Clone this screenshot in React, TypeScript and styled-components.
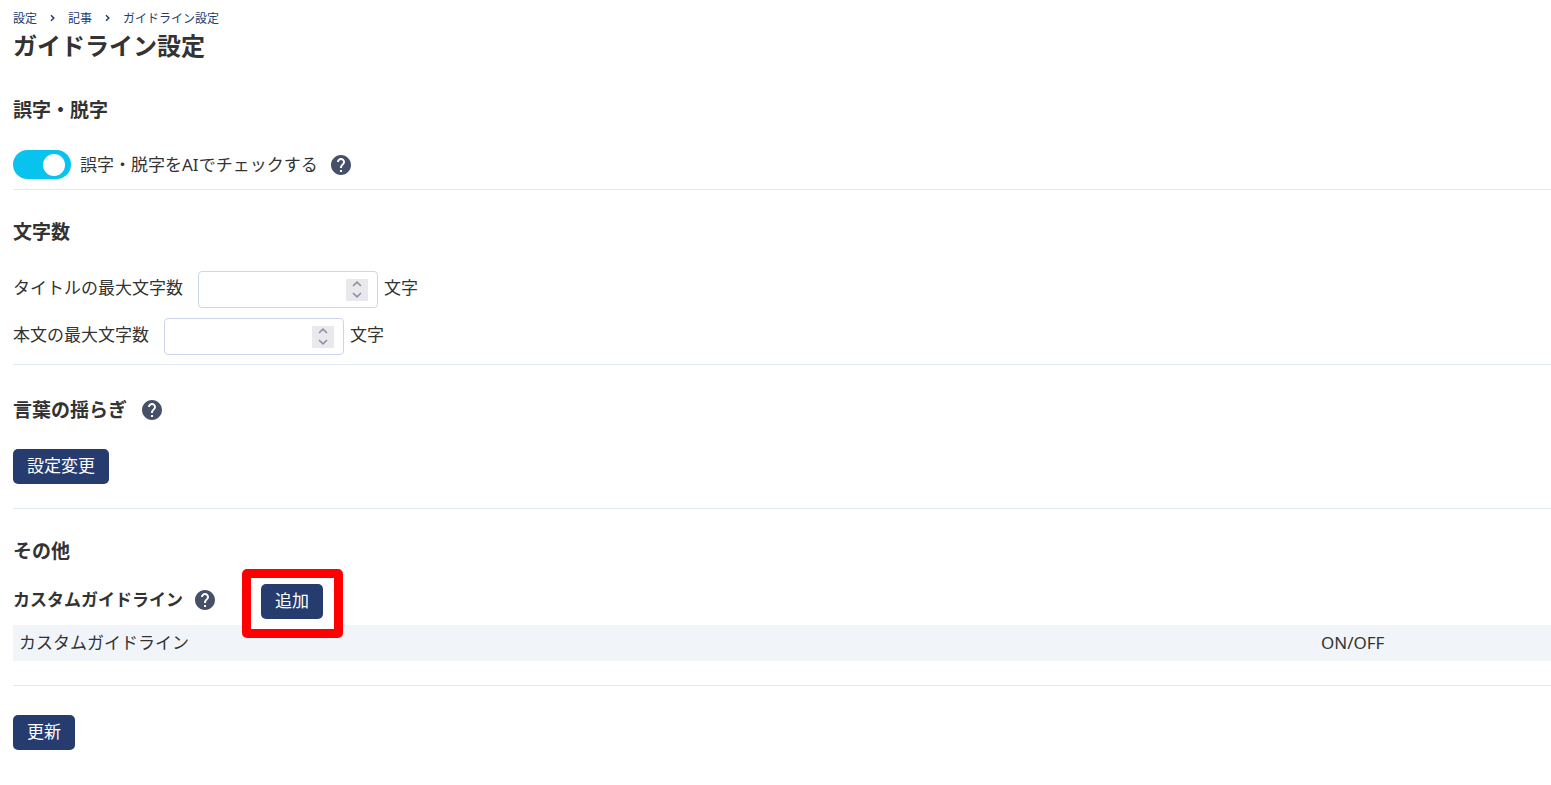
import React, { useState } from "react";
import styled, { createGlobalStyle } from "styled-components";
import { MdHelp } from "react-icons/md";

const GlobalStyle = createGlobalStyle`
  *, *::before, *::after { box-sizing: border-box; }
  body {
    margin: 0;
    background: #fff;
    color: #333;
    font-family: "Noto Sans", "Noto Sans CJK JP", sans-serif;
    font-size: 17px;
    line-height: 24px;
  }
  button, input { font: inherit; }
`;

const Page = styled.main`
  padding: 9px 0 32px 13px;
`;

const Breadcrumb = styled.nav`
  ol {
    display: flex;
    align-items: center;
    margin: 0;
    padding: 0;
    list-style: none;
    font-size: 12px;
    line-height: 20px;
  }
  li {
    display: flex;
    align-items: center;
  }
  a {
    color: #263c6f;
    text-decoration: none;
  }
`;

const Separator = styled.svg`
  width: 7px;
  height: 8px;
  margin: 0 12px 2px;
  fill: none;
  stroke: #263c6f;
  stroke-width: 1.5;
`;

const PageTitle = styled.h1`
  margin: 0;
  font-size: 24px;
  line-height: 34px;
`;

const Section = styled.section<{ $top: number; $bottom: number }>`
  padding: ${(p) => p.$top}px 0 ${(p) => p.$bottom}px;
  border-bottom: 1px solid #e2e8f0;
`;

const SectionTitle = styled.h2<{ $gap?: number }>`
  display: flex;
  align-items: center;
  gap: 13px;
  margin: 0 0 ${(p) => p.$gap ?? 25}px;
  font-size: 19px;
  line-height: 28px;
`;

const SubTitle = styled.h3`
  margin: 0 10px 0 0;
  font-size: 17px;
  line-height: 24px;
`;

const HelpButton = styled.button`
  display: inline-flex;
  padding: 0;
  border: 0;
  background: none;
  color: #475069;
  cursor: pointer;
  svg {
    width: 24px;
    height: 24px;
  }
`;

const ToggleRow = styled.div`
  display: flex;
  align-items: center;
  gap: 11px;
  min-height: 31px;
`;

const ToggleLabel = styled.label`
  display: flex;
  align-items: center;
  gap: 9px;
  cursor: pointer;
`;

const Toggle = styled.input`
  appearance: none;
  display: flex;
  align-items: center;
  width: 58px;
  height: 29px;
  margin: 0;
  padding: 0 6px;
  border-radius: 15px;
  background: #cbd5e1;
  cursor: pointer;
  &::before {
    content: "";
    width: 22px;
    height: 22px;
    border-radius: 50%;
    background: #fff;
  }
  &:checked {
    justify-content: flex-end;
    background: #08c3ee;
  }
`;

const FieldList = styled.div`
  display: flex;
  flex-direction: column;
  gap: 10px;
`;

const FieldRow = styled.div`
  display: flex;
  align-items: center;
  label {
    margin-right: 15px;
    padding-bottom: 3px;
  }
`;

const Unit = styled.span`
  margin-left: 6px;
  padding-bottom: 3px;
`;

const NumberBox = styled.div`
  display: flex;
  align-items: center;
  width: 180px;
  height: 37px;
  padding: 0 9px;
  border: 1px solid #cbd6ea;
  border-radius: 4px;
  background: #fff;
`;

const NumberInput = styled.input`
  appearance: textfield;
  flex: 1;
  min-width: 0;
  padding: 0;
  border: 0;
  outline: 0;
  background: none;
  color: inherit;
  &::-webkit-inner-spin-button,
  &::-webkit-outer-spin-button {
    appearance: none;
    margin: 0;
  }
`;

const Stepper = styled.div`
  display: flex;
  flex-direction: column;
  background: #e9e9ed;
  button {
    display: flex;
    align-items: center;
    justify-content: center;
    width: 22px;
    height: 11px;
    padding: 0;
    border: 0;
    background: none;
    color: #8f8f9d;
  }
  svg {
    width: 10px;
    height: 6px;
    fill: none;
    stroke: currentColor;
    stroke-width: 1.6;
  }
`;

const Button = styled.button`
  height: 35px;
  padding: 0 14px 2px;
  border: 0;
  border-radius: 5px;
  background: #263c6f;
  color: #fff;
  line-height: 24px;
  cursor: pointer;
`;

const CustomBar = styled.div`
  display: flex;
  align-items: flex-start;
  margin-bottom: 6px;
  > h3, > button {
    margin-top: 4px;
  }
`;

const Highlight = styled.div`
  position: relative;
  z-index: 1;
  display: flex;
  margin-left: 44px;
  &::before {
    content: "";
    position: absolute;
    z-index: -1;
    inset: -15px -20px -19px -19px;
    border: 9px solid #f00;
    border-radius: 5px;
    background: #fff;
  }
`;

const GuidelineTable = styled.table`
  width: 100%;
  border-collapse: collapse;
  background: #f1f5fa;
  th {
    height: 36px;
    padding: 0 6px;
    font-weight: 400;
    text-align: left;
  }
  th:last-child {
    width: 236px;
  }
`;

const Footer = styled.div`
  padding-top: 29px;
`;

function Help({ topic }: { topic: string }) {
  return (
    <HelpButton type="button" aria-label={topic}>
      <MdHelp />
    </HelpButton>
  );
}

function Chevron() {
  return (
    <Separator viewBox="0 0 7 8" aria-hidden="true">
      <path d="M2 1.2 4.8 4 2 6.8" />
    </Separator>
  );
}

function NumberField({ id, label }: { id: string; label: string }) {
  const [value, setValue] = useState("");
  const step = (by: number) => setValue(String(Math.max(0, Number(value) + by)));
  return (
    <FieldRow>
      <label htmlFor={id}>{label}</label>
      <NumberBox>
        <NumberInput id={id} type="number" min={0} value={value} onChange={(e) => setValue(e.target.value)} />
        <Stepper>
          <button type="button" tabIndex={-1} aria-label="増やす" onClick={() => step(1)}>
            <svg viewBox="0 0 10 6"><path d="M1 5 5 1.2 9 5" /></svg>
          </button>
          <button type="button" tabIndex={-1} aria-label="減らす" onClick={() => step(-1)}>
            <svg viewBox="0 0 10 6"><path d="M1 1 5 4.8 9 1" /></svg>
          </button>
        </Stepper>
      </NumberBox>
      <Unit>文字</Unit>
    </FieldRow>
  );
}

export default function App() {
  const [check, setCheck] = useState(true);
  return (
    <>
      <GlobalStyle />
      <Page>
        <Breadcrumb>
          <ol>
            <li><a href="#settings">設定</a><Chevron /></li>
            <li><a href="#articles">記事</a><Chevron /></li>
            <li><a href="#guideline">ガイドライン設定</a></li>
          </ol>
        </Breadcrumb>
        <PageTitle>ガイドライン設定</PageTitle>

        <Section $top={33} $bottom={9}>
          <SectionTitle>誤字・脱字</SectionTitle>
          <ToggleRow>
            <ToggleLabel>
              <Toggle type="checkbox" role="switch" checked={check} onChange={(e) => setCheck(e.target.checked)} />
              誤字・脱字をAIでチェックする
            </ToggleLabel>
            <Help topic="誤字・脱字のヘルプ" />
          </ToggleRow>
        </Section>

        <Section $top={28} $bottom={9}>
          <SectionTitle>文字数</SectionTitle>
          <FieldList>
            <NumberField id="title-max" label="タイトルの最大文字数" />
            <NumberField id="body-max" label="本文の最大文字数" />
          </FieldList>
        </Section>

        <Section $top={31} $bottom={24}>
          <SectionTitle>
            言葉の揺らぎ
            <Help topic="言葉の揺らぎのヘルプ" />
          </SectionTitle>
          <Button type="button">設定変更</Button>
        </Section>

        <Section $top={28} $bottom={24}>
          <SectionTitle $gap={19}>その他</SectionTitle>
          <CustomBar>
            <SubTitle>カスタムガイドライン</SubTitle>
            <Help topic="カスタムガイドラインのヘルプ" />
            <Highlight>
              <Button type="button">追加</Button>
            </Highlight>
          </CustomBar>
          <GuidelineTable>
            <thead>
              <tr>
                <th scope="col">カスタムガイドライン</th>
                <th scope="col">ON/OFF</th>
              </tr>
            </thead>
          </GuidelineTable>
        </Section>

        <Footer>
          <Button type="submit">更新</Button>
        </Footer>
      </Page>
    </>
  );
}
